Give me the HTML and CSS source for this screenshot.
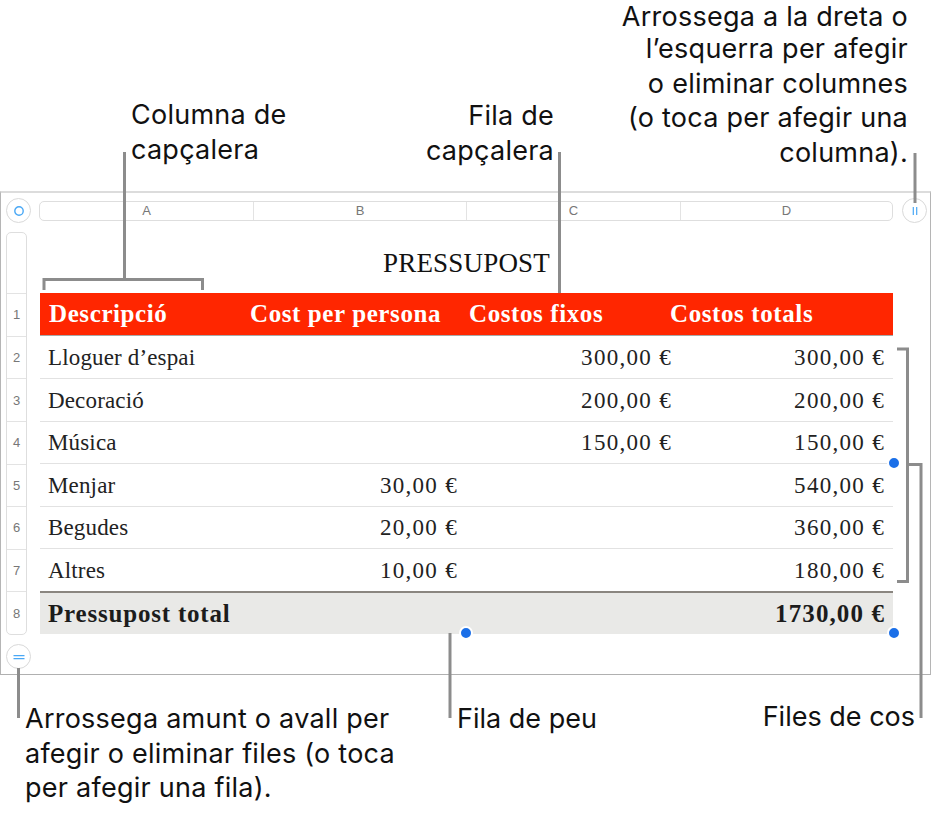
FILE: index.html
```html
<!DOCTYPE html>
<html lang="ca">
<head>
<meta charset="utf-8">
<title>Taula</title>
<link rel="stylesheet" href="styles.css">
</head>
<body>
<div class="figure">
  <section class="sheet">
    <div class="col-row">
      <div class="round-btn"><svg width="12" height="12" viewBox="0 0 12 12"><circle cx="6" cy="6" r="4.2" fill="none" stroke="#4aa8f5" stroke-width="1.4"/></svg></div>
      <div class="col-bar"><span>A</span><span>B</span><span>C</span><span>D</span></div>
      <div class="round-btn"><svg width="12" height="12" viewBox="0 0 12 12"><path d="M4.3 2v8M7.7 2v8" fill="none" stroke="#4aa8f5" stroke-width="1.2"/></svg></div>
    </div>
    <div class="main">
      <div class="row-bar">
        <span class="rb-head"></span>
        <span class="rb">1</span><span class="rb">2</span><span class="rb">3</span><span class="rb">4</span><span class="rb">5</span><span class="rb">6</span><span class="rb">7</span><span class="rb">8</span>
      </div>
      <div class="table-wrap">
        <div class="title">PRESSUPOST</div>
        <div class="row head">
          <div class="cell">Descripció</div>
          <div class="cell shift-b">Cost per persona</div>
          <div class="cell shift-c">Costos fixos</div>
          <div class="cell shift-d">Costos totals</div>
        </div>
        <div class="row r2"><div class="cell">Lloguer d’espai</div><div class="cell num"></div><div class="cell num">300,00 €</div><div class="cell num">300,00 €</div></div>
        <div class="row r2"><div class="cell">Decoració</div><div class="cell num"></div><div class="cell num">200,00 €</div><div class="cell num">200,00 €</div></div>
        <div class="row r1"><div class="cell">Música</div><div class="cell num"></div><div class="cell num">150,00 €</div><div class="cell num">150,00 €</div></div>
        <div class="row r2"><div class="cell">Menjar</div><div class="cell num">30,00 €</div><div class="cell num"></div><div class="cell num">540,00 €</div></div>
        <div class="row r1"><div class="cell">Begudes</div><div class="cell num">20,00 €</div><div class="cell num"></div><div class="cell num">360,00 €</div></div>
        <div class="row last"><div class="cell">Altres</div><div class="cell num">10,00 €</div><div class="cell num"></div><div class="cell num">180,00 €</div></div>
        <div class="row foot"><div class="cell">Pressupost total</div><div class="cell num"></div><div class="cell num"></div><div class="cell num">1730,00 €</div></div>
      </div>
    </div>
    <div class="add-row">
      <div class="round-btn"><svg width="14" height="12" viewBox="0 0 14 12"><path d="M1.5 4.6h11M1.5 7.6h11" fill="none" stroke="#4aa8f5" stroke-width="1.2"/></svg></div>
    </div>
  </section>

  <svg class="leaders" width="931" height="814" viewBox="0 0 931 814">
    <g fill="none" stroke="#8c8c8c" stroke-width="3">
      <path d="M124.5 152V279.5M44 290V279.5H202.5V290"/>
      <path d="M559.5 152V293"/>
      <path d="M915 153V203"/>
      <path d="M18.5 668V718"/>
      <path d="M450 633V718"/>
      <path d="M897 349H907.5V581.500H897"/>
      <path d="M907.500 464.500H921V718"/>
    </g>
    <g fill="#1a6fe8" stroke="#fff" stroke-width="2">
      <circle cx="894" cy="463" r="6"/>
      <circle cx="466" cy="633" r="6"/>
      <circle cx="894" cy="633" r="6"/>
    </g>
  </svg>

  <p class="note n-col">Columna de<br>capçalera</p>
  <p class="note n-row">Fila de<br>capçalera</p>
  <p class="note n-add-col"><span class="first">Arrossega a la dreta o</span>l’esquerra per afegir<br>o eliminar columnes<br>(o toca per afegir una<br>columna).</p>
  <p class="note n-add-row">Arrossega amunt o avall per<br>afegir o eliminar files (o toca<br>per afegir una fila).</p>
  <p class="note n-foot">Fila de peu</p>
  <p class="note n-body">Files de cos</p>
</div>
</body>
</html>
```
FILE: styles.css
```css
* { box-sizing: border-box; }
html, body { margin: 0; padding: 0; background: #fff; }
body { width: 931px; height: 814px; overflow: hidden; }
.figure { position: relative; width: 931px; height: 814px; padding-top: 191px; }

.sheet {
  width: 931px;
  height: 484px;
  border-top: 2px solid #dcdcdc;
  border-left: 1px solid #b5b5b5;
  border-right: 1px solid #b5b5b5;
  border-bottom: 1px solid #b0b0b0;
  display: flex;
  flex-direction: column;
  padding: 5px 3px 0 5px;
}
.col-row { display: flex; align-items: flex-start; height: 26px; }
.round-btn {
  width: 25px;
  height: 25px;
  flex: none;
  border-radius: 50%;
  border: 1px solid #d9d9d9;
  background: #fff;
  display: flex;
  align-items: center;
  justify-content: center;
}
.col-bar {
  width: 854px;
  flex: none;
  height: 20px;
  margin: 3px 9px 0 8px;
  display: grid;
  grid-template-columns: 213px 213px 214px 1fr;
  border: 1px solid #dedede;
  border-radius: 5px;
}
.col-bar span {
  font: 13px/18px "Liberation Sans", sans-serif;
  color: #777;
  text-align: center;
  border-left: 1px solid #e3e3e3;
}
.col-bar span:first-child { border-left: 0; }

.main { display: flex; margin-top: 8px; height: 403px; }
.row-bar {
  width: 21px;
  flex: none;
  border: 1px solid #dedede;
  border-radius: 5px;
  display: flex;
  flex-direction: column;
}
.rb-head { height: 60px; flex: none; }
.rb {
  flex: 1;
  border-top: 1px solid #e3e3e3;
  font: 13px/1 "Liberation Sans", sans-serif;
  color: #777;
  display: flex;
  align-items: center;
  justify-content: center;
}
.table-wrap { width: 853px; margin-left: 13px; font-family: "Liberation Serif", serif; color: #222; }
.title { height: 61px; padding-top: 16px; text-align: center; font-size: 27px; letter-spacing: 0.2px; line-height: 30px; color: #111; }
.row {
  display: grid;
  grid-template-columns: 213px 213px 214px 213px;
  align-items: center;
  border-bottom: 1px solid #e2e2e2;
  font-size: 23px;
}
.r2 { height: 43px; }
.r1 { height: 42px; }
.cell { padding: 1px 8px 0; white-space: nowrap; letter-spacing: 0.15px; }
.num { text-align: right; letter-spacing: 1.3px; }
.head {
  height: 43px;
  background: #ff2600;
  color: #fff;
  font-weight: 700;
  font-size: 25px;
  border-bottom: 1px solid #a8a8a8;
}
.head .cell { padding: 0; letter-spacing: 0.6px; }
.head .cell:first-child { padding-left: 9px; }
.head .shift-b { margin-left: -3px; }
.head .shift-c { margin-left: 3px; }
.head .shift-d { margin-left: -10px; }
.last { height: 44px; border-bottom: 2px solid #8a8680; }
.foot { height: 41px; background: #e9e9e7; font-weight: 700; font-size: 25px; border-bottom: 0; color: #1c1c1c; }
.foot .cell { letter-spacing: 0.8px; padding-top: 0; }
.foot .num { letter-spacing: 1.1px; }

.add-row { margin-top: 9px; }

.leaders { position: absolute; left: 0; top: 0; pointer-events: none; }

.note {
  position: absolute;
  margin: 0;
  font-family: Inter, sans-serif;
  font-size: 27px;
  letter-spacing: 0.25px;
  line-height: 34.500px;
  color: #111;
  white-space: nowrap;
}
.n-col { left: 131px; top: 98px; }
.n-row { right: 377px; top: 99px; text-align: right; }
.n-add-col { right: 23px; top: 0; text-align: right; }
.n-add-col .first { display: block; line-height: 33px; margin-bottom: -1px; }
.n-add-row { left: 25px; top: 702px; }
.n-foot { left: 457px; top: 702px; letter-spacing: 0; }
.n-body { right: 16px; top: 700px; letter-spacing: 0; }
```
